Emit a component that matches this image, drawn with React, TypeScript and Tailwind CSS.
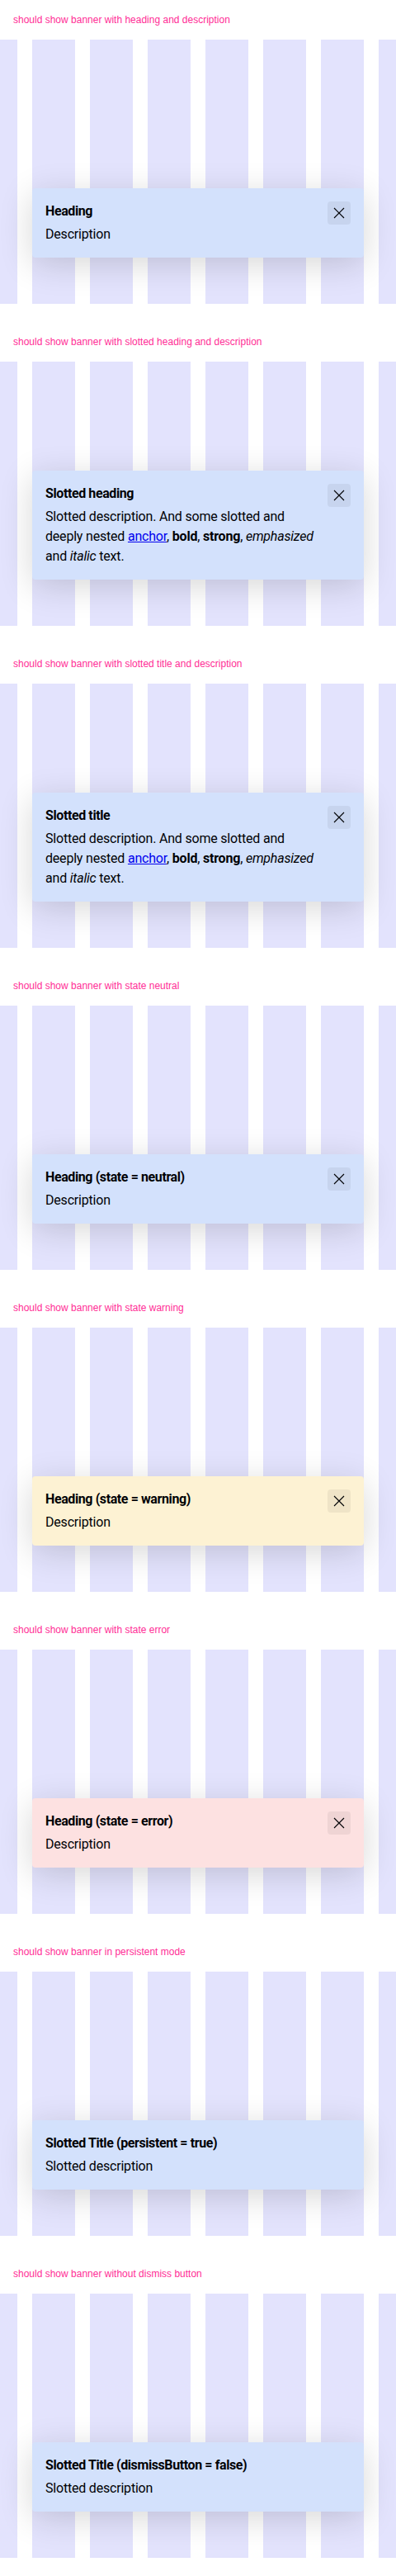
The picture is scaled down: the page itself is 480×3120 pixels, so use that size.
import type { ReactNode } from "react";

type State = "info" | "warning" | "error";

type BannerProps = {
  state?: State;
  heading: ReactNode;
  description: ReactNode;
  dismissButton?: boolean;
};

const stateStyles: Record<State, string> = {
  info: "bg-[#d3e1fc]",
  warning: "bg-[#fdf2d3]",
  error: "bg-[#fde1e1]",
};

const cases: { title: string; banner: BannerProps }[] = [
  {
    title: "should show banner with heading and description",
    banner: { heading: "Heading", description: "Description" },
  },
  {
    title: "should show banner with slotted heading and description",
    banner: { heading: "Slotted heading", description: <SlottedDescription /> },
  },
  {
    title: "should show banner with slotted title and description",
    banner: { heading: "Slotted title", description: <SlottedDescription /> },
  },
  {
    title: "should show banner with state neutral",
    banner: { heading: "Heading (state = neutral)", description: "Description" },
  },
  {
    title: "should show banner with state warning",
    banner: {
      state: "warning",
      heading: "Heading (state = warning)",
      description: "Description",
    },
  },
  {
    title: "should show banner with state error",
    banner: {
      state: "error",
      heading: "Heading (state = error)",
      description: "Description",
    },
  },
  {
    title: "should show banner in persistent mode",
    banner: {
      heading: "Slotted Title (persistent = true)",
      description: "Slotted description",
      dismissButton: false,
    },
  },
  {
    title: "should show banner without dismiss button",
    banner: {
      heading: "Slotted Title (dismissButton = false)",
      description: "Slotted description",
      dismissButton: false,
    },
  },
];

export default function App() {
  return (
    <div className="w-[480px] bg-white font-['Liberation_Sans',Arial,sans-serif]">
      {cases.map((c) => (
        <section key={c.title} className="pb-[22px]">
          <p className="px-4 pt-4 pb-4 text-[12px] leading-4 text-[#ff2d96]">
            {c.title}
          </p>
          <div className="relative h-[320px] overflow-hidden">
            <GridBackground />
            <div className="absolute bottom-[56px] left-[39px] right-[39px]">
              <Banner {...c.banner} />
            </div>
          </div>
        </section>
      ))}
    </div>
  );
}

function GridBackground() {
  return (
    <div className="flex h-full gap-[18px]">
      <div className="w-[21px] bg-[#e3e3fd]" />
      {[0, 1, 2, 3, 4, 5].map((i) => (
        <div key={i} className="w-[52px] bg-[#e3e3fd]" />
      ))}
      <div className="w-[21px] bg-[#e3e3fd]" />
    </div>
  );
}

function Banner({
  state = "info",
  heading,
  description,
  dismissButton = true,
}: BannerProps) {
  return (
    <div
      className={`flex gap-4 rounded-[4px] p-4 text-[#010205] shadow-[0_8px_40px_rgba(0,0,0,0.16)] ${stateStyles[state]}`}
    >
      <div className="flex min-w-0 flex-1 flex-col gap-1 font-['Roboto',sans-serif] text-[16px] leading-6">
        <h3 className="font-bold tracking-[-0.4px]">{heading}</h3>
        <p className="tracking-[-0.2px]">{description}</p>
      </div>
      {dismissButton && (
        <button
          type="button"
          className="flex h-7 w-7 shrink-0 items-center justify-center rounded-[4px] bg-black/[0.055]"
        >
          <CloseIcon />
        </button>
      )}
    </div>
  );
}

function SlottedDescription() {
  return (
    <>
      Slotted description. And some slotted and deeply nested{" "}
      <a href="#" className="text-[#0000ee] underline">
        anchor
      </a>
      , <b>bold</b>, <strong>strong</strong>, <em>emphasized</em> and{" "}
      <i>italic</i> text.
    </>
  );
}

function CloseIcon() {
  return (
    <svg
      className="h-[14px] w-[14px]"
      viewBox="0 0 14 14"
      fill="none"
      stroke="currentColor"
      strokeWidth="1.1"
      aria-hidden
    >
      <path d="M1 1l12 12M13 1L1 13" />
    </svg>
  );
}
